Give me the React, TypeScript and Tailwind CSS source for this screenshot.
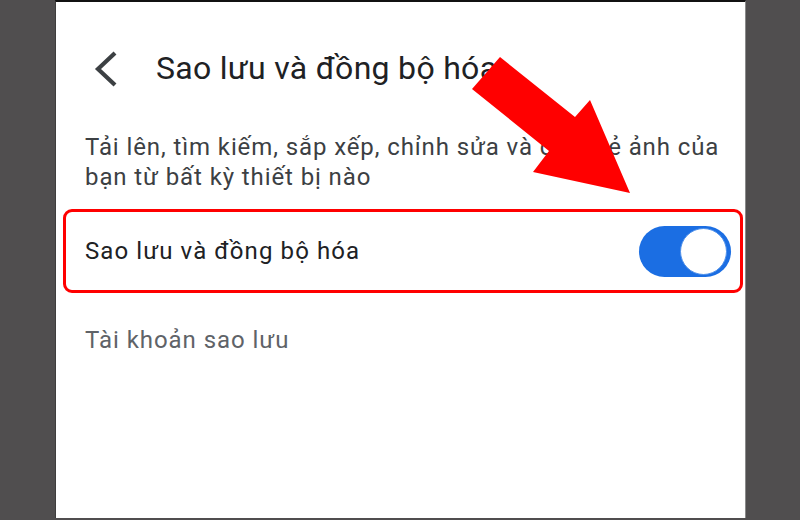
import React, { useState } from 'react';

// Settings screen: backup & sync, with a red annotation arrow on top
const Toggle: React.FC<{ on: boolean; onChange: () => void }> = ({ on, onChange }) => (
  <button
    type="button"
    onClick={onChange}
    className={`relative flex h-[51px] w-[92px] shrink-0 items-center rounded-full px-[4px] ${on ? 'justify-end bg-[#1b6ee3]' : 'justify-start bg-[#bdc1c6]'}`}
  >
    <span className="block h-[47px] w-[47px] rounded-full border border-[#4d8fea] bg-white" />
  </button>
);

const App: React.FC = () => {
  const [backupOn, setBackupOn] = useState(true);

  return (
    <div className="flex h-[520px] w-[800px] overflow-hidden bg-[#504e4f] font-['Roboto','Liberation_Sans',sans-serif]">
      <div className="w-[55px] shrink-0" />

      <div className="relative flex h-[518px] w-[691px] shrink-0 flex-col border-t-2 border-l border-r border-[#111111] border-l-[#3e3d3d] border-r-[#8a8a8a] bg-white">
        {/* Header */}
        <div className="mt-[45px] flex h-[42px] items-center">
          <svg width="30" height="40" viewBox="0 0 30 40" className="ml-[38px] shrink-0">
            <path d="M21 5 L4 21 L21 37" fill="none" stroke="#3c4043" strokeWidth="4.2" />
          </svg>
          <h1 className="ml-[32px] text-[32px] font-normal tracking-[0.3px] text-[#202124]">Sao lưu và đồng bộ hóa</h1>
        </div>

        {/* Description */}
        <p className="mt-[43px] pl-[29px] pr-[10px] text-[24px] leading-[30px] tracking-[0.9px] text-[#3c4043]">
          Tải lên, tìm kiếm, sắp xếp, chỉnh sửa và chia sẻ ảnh của bạn từ bất kỳ thiết bị nào
        </p>

        {/* Highlighted row */}
        <div className="mt-[17px] ml-[7px] mr-[2px] flex h-[84px] items-center justify-between rounded-[9px] border-[3px] border-[#ff0000] pl-[19px] pr-[9px]">
          <span className="text-[24px] tracking-[1.1px] text-[#202124]">Sao lưu và đồng bộ hóa</span>
          <Toggle on={backupOn} onChange={() => setBackupOn(!backupOn)} />
        </div>

        <div className="mt-[29px] pl-[29px] text-[24px] tracking-[0.95px] text-[#5f6368]">Tài khoản sao lưu</div>

        {/* Annotation arrow */}
        <svg
          width="691"
          height="518"
          viewBox="0 0 691 518"
          className="pointer-events-none absolute left-[-1px] top-[-2px]"
        >
          <polygon
            points="445,57 520,117 535,100 575,193 478,172 494,151 417,89"
            fill="#ff0000"
          />
        </svg>
      </div>

      <div className="flex-1" />
    </div>
  );
};

export default App;
